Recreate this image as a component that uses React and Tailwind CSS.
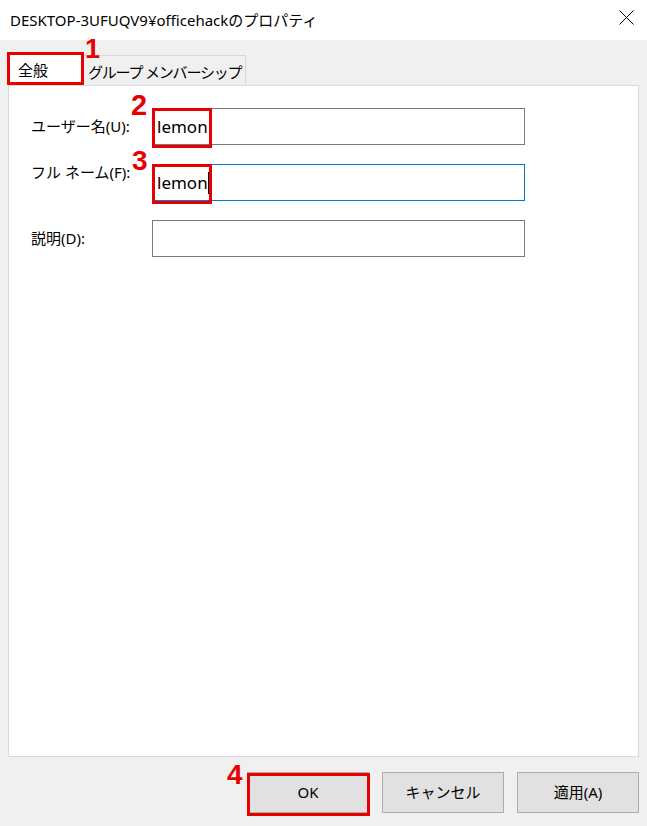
const font = "font-['Noto_Sans','Noto_Sans_CJK_JP',sans-serif]";

function Field({ label, value, focused, caret }) {
  return (
    <div className="flex items-center h-[37px]">
      <span className={`w-[121px] text-[15px] text-black ${focused ? '-mt-[20px]' : ''}`}>{label}</span>
      <div
        className={`w-[373px] h-[37px] flex items-center px-[4px] bg-white border ${
          focused ? 'border-[#0078d7]' : 'border-[#7a7a7a]'
        }`}
      >
        {value && <span className="text-[17px] text-black leading-none">{value}</span>}
        {caret && <span className="w-px h-[22px] bg-black" />}
      </div>
    </div>
  );
}

export default function App() {
  return (
    <div className={`relative w-[647px] h-[826px] bg-[#f0f0f0] flex flex-col ${font}`}>
      {/* Title bar */}
      <div className="h-[40px] bg-white flex items-center justify-between pl-[10px] pr-[13px]">
        <span className="text-[15px] text-black">DESKTOP-3UFUQV9¥officehackのプロパティ</span>
        <svg width="15" height="15" viewBox="0 0 15 15" className="-mt-[6px]">
          <path d="M0.5 0.5L14.5 14.5M14.5 0.5L0.5 14.5" stroke="black" strokeWidth="1" />
        </svg>
      </div>

      {/* Tabs */}
      <div className="px-[8px] pt-[13px] flex flex-col">
        <div className="flex items-end h-[33px]">
          <div className="w-[76px] h-[33px] bg-white border border-b-0 border-[#d9d9d9] flex items-center pl-[9px] text-[15px] text-black">
            全般
          </div>
          <div className="w-[162px] h-[31px] border border-l-0 border-b-0 border-[#d9d9d9] flex items-center pl-[4px] pt-[2px] text-[15px] tracking-[-1.2px] text-black whitespace-nowrap">
            グループ メンバーシップ
          </div>
        </div>

        {/* Panel */}
        <div className="h-[672px] bg-white border border-[#d9d9d9] -mt-px pt-[22px] pl-[22px] flex flex-col gap-[19px]">
          <Field label="ユーザー名(U):" value="lemon" />
          <Field label="フル ネーム(F):" value="lemon" focused caret />
          <Field label="説明(D):" />
        </div>
      </div>

      {/* Buttons */}
      <div className="flex justify-end gap-[13px] pr-[8px] mt-[15px]">
        {['OK', 'キャンセル', '適用(A)'].map((t) => (
          <button
            key={t}
            className="w-[122px] h-[41px] bg-[#e1e1e1] border border-[#adadad] text-[15px] text-black"
          >
            {t}
          </button>
        ))}
      </div>

      {/* Annotations */}
      <div className="absolute left-[7px] top-[52px] w-[77px] h-[33px] border-[3px] border-[#e60000]" />
      <div className="absolute left-[152px] top-[108px] w-[60px] h-[40px] border-[3px] border-[#e60000]" />
      <div className="absolute left-[152px] top-[164px] w-[60px] h-[40px] border-[3px] border-[#e60000]" />
      <div className="absolute left-[247px] top-[773px] w-[123px] h-[43px] border-[3px] border-[#e60000]" />

      <span className="absolute left-[85px] top-[36px] text-[27px] font-bold leading-none text-[#e60000] font-['Liberation_Sans',sans-serif]">1</span>
      <span className="absolute left-[131px] top-[91px] text-[29px] font-bold leading-none text-[#e60000] font-['Liberation_Sans',sans-serif]">2</span>
      <span className="absolute left-[132px] top-[147px] text-[28px] font-bold leading-none text-[#e60000] font-['Liberation_Sans',sans-serif]">3</span>
      <span className="absolute left-[227px] top-[761px] text-[28px] font-bold leading-none text-[#e60000] font-['Liberation_Sans',sans-serif]">4</span>
    </div>
  );
}
